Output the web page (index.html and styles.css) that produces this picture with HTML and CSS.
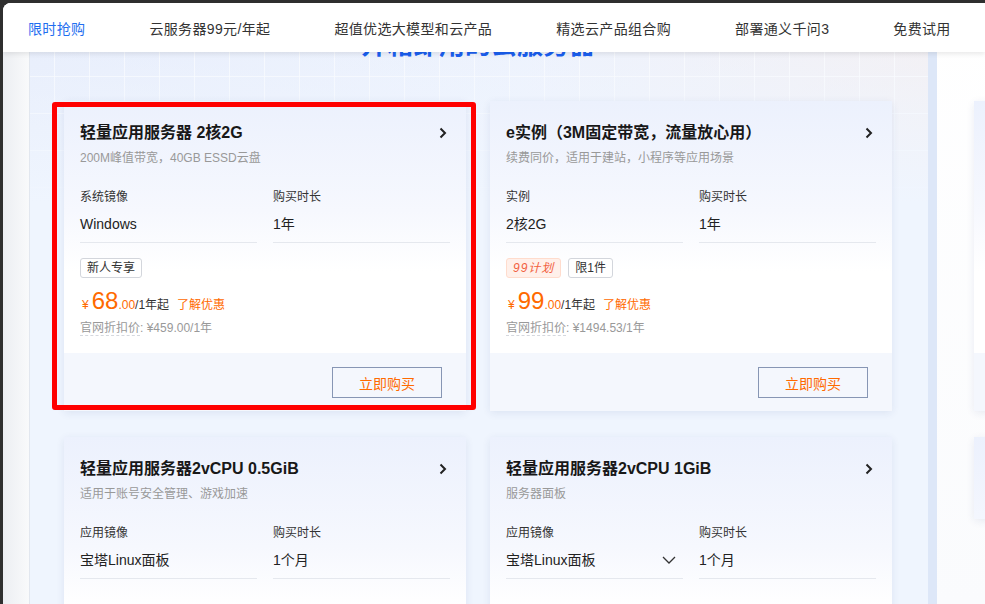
FILE: index.html
```html
<!DOCTYPE html>
<html lang="zh-CN">
<head>
<meta charset="utf-8">
<title>限时抢购</title>
<link rel="stylesheet" href="styles.css">
</head>
<body>
<div class="app">
  <nav class="nav">
    <a class="nav-item active">限时抢购</a>
    <a class="nav-item">云服务器99元/年起</a>
    <a class="nav-item">超值优选大模型和云产品</a>
    <a class="nav-item">精选云产品组合购</a>
    <a class="nav-item">部署通义千问3</a>
    <a class="nav-item">免费试用</a>
  </nav>
  <div class="stage">
    <div class="gutter"></div>
    <section class="panel">
      <h2 class="panel-title">开箱即用的云服务器</h2>
      <div class="grid">
        <article class="card">
          <div class="card-body">
            <div class="card-head"><h3 class="card-title">轻量应用服务器 2核2G</h3><svg class="chev" viewBox="0 0 16 16"><path d="M6.5 3.5L11 8l-4.5 4.5"/></svg></div>
            <p class="card-sub">200M峰值带宽，40GB ESSD云盘</p>
            <div class="fields">
              <div class="field"><div class="field-label">系统镜像</div><div class="field-value">Windows</div></div>
              <div class="field"><div class="field-label">购买时长</div><div class="field-value">1年</div></div>
            </div>
            <div class="tags"><span class="tag">新人专享</span></div>
            <div class="price"><span class="cur">¥</span><span class="num">68</span><span class="dec">.00</span><span class="unit">/1年起</span><a class="promo">了解优惠</a></div>
            <div class="orig"><span class="orig-label">官网折扣价</span>: ¥459.00/1年</div>
          </div>
          <div class="card-foot"><button class="buy">立即购买</button></div>
          <div class="mark"></div>
        </article>
        <article class="card">
          <div class="card-body">
            <div class="card-head"><h3 class="card-title">e实例（3M固定带宽，流量放心用）</h3><svg class="chev" viewBox="0 0 16 16"><path d="M6.5 3.5L11 8l-4.5 4.5"/></svg></div>
            <p class="card-sub">续费同价，适用于建站，小程序等应用场景</p>
            <div class="fields">
              <div class="field"><div class="field-label">实例</div><div class="field-value">2核2G</div></div>
              <div class="field"><div class="field-label">购买时长</div><div class="field-value">1年</div></div>
            </div>
            <div class="tags"><span class="tag tag-hot">99计划</span><span class="tag">限1件</span></div>
            <div class="price"><span class="cur">¥</span><span class="num">99</span><span class="dec">.00</span><span class="unit">/1年起</span><a class="promo">了解优惠</a></div>
            <div class="orig"><span class="orig-label">官网折扣价</span>: ¥1494.53/1年</div>
          </div>
          <div class="card-foot"><button class="buy">立即购买</button></div>
        </article>
        <article class="card">
          <div class="card-body">
            <div class="card-head"><h3 class="card-title">轻量应用服务器2vCPU 0.5GiB</h3><svg class="chev" viewBox="0 0 16 16"><path d="M6.5 3.5L11 8l-4.5 4.5"/></svg></div>
            <p class="card-sub">适用于账号安全管理、游戏加速</p>
            <div class="fields">
              <div class="field"><div class="field-label">应用镜像</div><div class="field-value">宝塔Linux面板</div></div>
              <div class="field"><div class="field-label">购买时长</div><div class="field-value">1个月</div></div>
            </div>
            <div class="tags"></div>
            <div class="price"><span class="cur">¥</span><span class="num">5</span><span class="dec">.00</span><span class="unit">/1个月起</span><a class="promo">了解优惠</a></div>
            <div class="orig"><span class="orig-label">官网折扣价</span>: ¥24.00/1个月</div>
          </div>
          <div class="card-foot"><button class="buy">立即购买</button></div>
        </article>
        <article class="card">
          <div class="card-body">
            <div class="card-head"><h3 class="card-title">轻量应用服务器2vCPU 1GiB</h3><svg class="chev" viewBox="0 0 16 16"><path d="M6.5 3.5L11 8l-4.5 4.5"/></svg></div>
            <p class="card-sub">服务器面板</p>
            <div class="fields">
              <div class="field"><div class="field-label">应用镜像</div><div class="field-value select">宝塔Linux面板<svg class="caret" viewBox="0 0 16 16"><path d="M2 5l6 6 6-6"/></svg></div></div>
              <div class="field"><div class="field-label">购买时长</div><div class="field-value">1个月</div></div>
            </div>
            <div class="tags"></div>
            <div class="price"><span class="cur">¥</span><span class="num">9</span><span class="dec">.00</span><span class="unit">/1个月起</span><a class="promo">了解优惠</a></div>
            <div class="orig"><span class="orig-label">官网折扣价</span>: ¥34.00/1个月</div>
          </div>
          <div class="card-foot"><button class="buy">立即购买</button></div>
        </article>
      </div>
    </section>
    <div class="divider"></div>
    <section class="panel2">
      <div class="grid">
        <article class="card">
          <div class="card-body">
            <div class="card-head"><h3 class="card-title">云数据库 RDS MySQL</h3></div>
            <p class="card-sub">高可用版</p>
            <div class="fields">
              <div class="field"><div class="field-label">规格</div><div class="field-value">2核4G</div></div>
              <div class="field"><div class="field-label">购买时长</div><div class="field-value">1年</div></div>
            </div>
            <div class="tags"><span class="tag">新人专享</span></div>
            <div class="price"><span class="cur">¥</span><span class="num">99</span><span class="dec">.00</span><span class="unit">/1年起</span></div>
            <div class="orig"><span class="orig-label">官网折扣价</span>: ¥999.00/1年</div>
          </div>
          <div class="card-foot"><button class="buy">立即购买</button></div>
        </article>
        <article class="card">
          <div class="card-body">
            <div class="card-head"><h3 class="card-title">对象存储 OSS</h3></div>
            <p class="card-sub">标准存储包</p>
          </div>
        </article>
      </div>
    </section>
  </div>
</div>
</body>
</html>
```

FILE: styles.css
```css
* { box-sizing: border-box; }

body {
  margin: 0;
  background: #2f2f2f;
  font-family: "Liberation Sans", "Noto Sans CJK SC", sans-serif;
}

.app {
  margin: 3px 0 0 3px;
  height: 601px;
  background: #fff;
  border-top-left-radius: 8px;
  overflow: hidden;
  position: relative;
}

.nav {
  position: absolute;
  top: 0;
  left: 0;
  right: 0;
  height: 49px;
  z-index: 2;
  background: #fff;
  box-shadow: 0 2px 5px rgba(0, 0, 0, .09);
  display: flex;
  align-items: center;
  gap: 64px;
  padding-left: 25px;
  font-size: 14px;
  letter-spacing: .35px;
  color: #333;
  white-space: nowrap;
}

.nav-item.active { color: #1f6ff0; }

.stage {
  display: flex;
  height: 100%;
}

.gutter {
  width: 26px;
  flex: none;
  background: linear-gradient(90deg, #eceef2, #f9fafb);
}

.panel {
  width: 899px;
  flex: none;
  border-left: 1px solid #e2e7ef;
  padding: 29px 36px 0 34px;
  background:
    linear-gradient(180deg, rgba(239, 245, 254, 0) 0, rgba(239, 245, 254, .6) 110px, #eff5fe 200px),
    repeating-linear-gradient(90deg, transparent 0 24px, rgba(255, 255, 255, .75) 24px 25px, transparent 25px 35px),
    repeating-linear-gradient(180deg, transparent 0 36px, rgba(255, 255, 255, .75) 36px 37px),
    linear-gradient(90deg, #e6ecfb 0, #edf2fd 55%, #f4eff1 100%);
}

.panel-title {
  margin: 0;
  text-align: center;
  font-size: 26px;
  line-height: 26px;
  font-weight: 700;
  color: #1a5ff0;
}

.grid {
  margin-top: 43px;
  display: grid;
  grid-template-columns: 402px 402px;
  column-gap: 24px;
  row-gap: 26px;
}

.divider {
  width: 9px;
  flex: none;
  background: #dde7f8;
}

.panel2 {
  flex: 1;
  min-width: 0;
  overflow: hidden;
  padding: 98px 0 0 37px;
  background: linear-gradient(180deg, #fff, #fafbfd);
}

.panel2 .grid {
  margin-top: 0;
  grid-template-columns: 402px;
}

.card {
  position: relative;
  width: 402px;
  background: #fff;
  border-radius: 2px;
  box-shadow: 0 2px 8px rgba(30, 60, 120, .09);
  display: flex;
  flex-direction: column;
}

.card-body {
  padding: 20px 16px 16px;
  background: linear-gradient(180deg, #ecf1fd 0, #f6f8fe 110px, #fff 170px);
}

.card-head {
  display: flex;
  justify-content: space-between;
  align-items: center;
  height: 24px;
}

.card-title {
  margin: 0;
  font-size: 16px;
  line-height: 24px;
  font-weight: 700;
  color: #181818;
  white-space: nowrap;
}

.chev {
  width: 16px;
  height: 16px;
  flex: none;
}

.chev path {
  fill: none;
  stroke: #222;
  stroke-width: 2;
}

.card-sub {
  margin: 4px 0 0;
  font-size: 12px;
  line-height: 18px;
  color: #999;
}

.fields {
  margin-top: 20px;
  display: grid;
  grid-template-columns: 1fr 1fr;
  column-gap: 16px;
}

.field-label {
  font-size: 12px;
  line-height: 20px;
  color: #333;
}

.field-value {
  margin-top: 6px;
  font-size: 14px;
  line-height: 22px;
  color: #222;
  padding-bottom: 7px;
  border-bottom: 1px solid #e5e8ee;
  display: flex;
  justify-content: space-between;
  align-items: center;
}

.field-value.select { padding-right: 6px; }

.caret {
  width: 16px;
  height: 16px;
}

.caret path {
  fill: none;
  stroke: #333;
  stroke-width: 1.3;
}

.tags {
  margin-top: 15px;
  height: 20px;
  display: flex;
  gap: 7px;
}

.tag {
  font-size: 12px;
  line-height: 18px;
  padding: 0 6px;
  border: 1px solid #d3d6dc;
  border-radius: 3px;
  color: #333;
  background: #fff;
}

.tag-hot {
  background: #fff0ea;
  border-color: #ffdccd;
  color: #f2603e;
  font-style: italic;
  letter-spacing: 1px;
}

.price {
  margin-top: 9px;
  height: 28px;
  display: flex;
  align-items: baseline;
  line-height: 28px;
  color: #ff6a00;
}

.cur { font-size: 12px; margin: 0 3px 0 2px; }
.num { font-size: 24px; }
.dec { font-size: 12px; }
.unit { font-size: 12px; color: #333; }
.promo { font-size: 12px; margin-left: 8px; color: #ff6a00; }

.orig {
  margin-top: 4px;
  font-size: 12px;
  line-height: 18px;
  color: #999;
}

.orig-label { border-bottom: 1px dashed #d5d8de; }

.card-foot {
  background: #f4f7fd;
  padding: 14px 24px 13px;
  display: flex;
  justify-content: flex-end;
}

.buy {
  width: 110px;
  height: 31px;
  border: 1px solid #8796b4;
  border-radius: 0;
  background: transparent;
  color: #ff6a00;
  font: 14px "Liberation Sans", "Noto Sans CJK SC", sans-serif;
}

.mark {
  position: absolute;
  left: -12px;
  top: 1px;
  right: -10px;
  bottom: 1px;
  border: 5px solid #ff0000;
  border-radius: 3px;
  pointer-events: none;
}
```
